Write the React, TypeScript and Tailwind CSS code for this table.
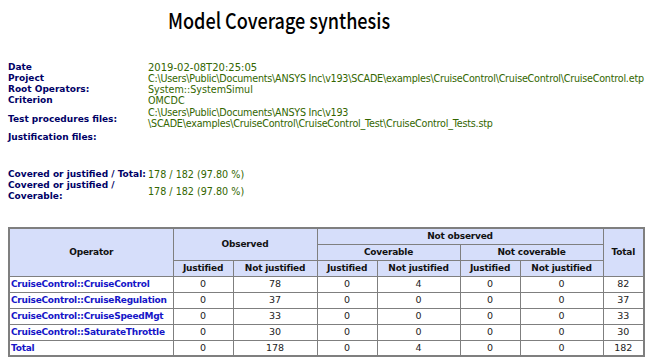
import React from "react";

const rows = [
  ["CruiseControl::CruiseControl", "0", "78", "0", "4", "0", "0", "82"],
  ["CruiseControl::CruiseRegulation", "0", "37", "0", "0", "0", "0", "37"],
  ["CruiseControl::CruiseSpeedMgt", "0", "33", "0", "0", "0", "0", "33"],
  ["CruiseControl::SaturateThrottle", "0", "30", "0", "0", "0", "0", "30"],
  ["Total", "0", "178", "0", "4", "0", "0", "182"],
];

const th = "border border-[#7f7f7f] bg-[#d6defa] text-[#111] font-bold text-center p-0 h-[16px] leading-[14px] tracking-[-0.2px]";
const td = "border border-[#7f7f7f] text-center p-0 h-[16px] leading-[14px] text-[#222] text-[9.5px]";

export default function App() {
  return (
    <div className="w-[650px] h-[363px] bg-white overflow-hidden" style={{ fontFamily: '"DejaVu Sans", Verdana, sans-serif' }}>
      <div className="pt-[5px] pl-[168px] h-[62px]">
        <h1 className="inline-block origin-left scale-x-[0.82] text-[22px] leading-[28px] text-black whitespace-nowrap" style={{ fontFamily: '"Noto Sans CJK JP", "Liberation Sans", sans-serif', fontWeight: 500 }}>
          Model Coverage synthesis
        </h1>
      </div>
      <div className="pl-[8px] grid grid-cols-[140px_1fr] text-[9px] leading-[11px]">
        <div className="font-bold text-[#000066]">Date</div>
        <div className="text-[#336600] text-[10px]">2019-02-08T20:25:05</div>
        <div className="font-bold text-[#000066]">Project</div>
        <div className="text-[#336600] text-[9.6px] whitespace-nowrap tracking-[-0.22px]">C:\Users\Public\Documents\ANSYS Inc\v193\SCADE\examples\CruiseControl\CruiseControl\CruiseControl.etp</div>
        <div className="font-bold text-[#000066]">Root Operators:</div>
        <div className="text-[#336600] text-[9.6px]">System::SystemSimul</div>
        <div className="font-bold text-[#000066]">Criterion</div>
        <div className="text-[#336600] text-[9.6px]">OMCDC</div>
        <div className="font-bold text-[#000066] flex items-center pt-[3px]">Test procedures files:</div>
        <div className="text-[#336600] text-[9.6px] pt-[1px] tracking-[-0.22px] whitespace-nowrap">
          C:\Users\Public\Documents\ANSYS Inc\v193
          <br />
          \SCADE\examples\CruiseControl\CruiseControl_Test\CruiseControl_Tests.stp
        </div>
        <div className="font-bold text-[#000066] pt-[3px]">Justification files:</div>
        <div></div>
      </div>
      <div className="pl-[8px] pt-[26px] grid grid-cols-[140px_1fr] text-[9px] leading-[11px]">
        <div className="font-bold text-[#000066]">Covered or justified / Total:</div>
        <div className="text-[#336600] text-[9.6px]">178 / 182 (97.80 %)</div>
        <div className="font-bold text-[#000066]">Covered or justified /<br />Coverable:</div>
        <div className="text-[#336600] text-[9.6px] flex items-center">178 / 182 (97.80 %)</div>
      </div>
      <div className="pl-[8px] pt-[25px]">
        <table className="border-collapse border-2 border-[#7f7f7f] text-[9px] table-fixed w-[635px]">
          <colgroup>
            <col className="w-[164px]" />
            <col className="w-[60px]" />
            <col className="w-[84px]" />
            <col className="w-[60px]" />
            <col className="w-[83px]" />
            <col className="w-[60px]" />
            <col className="w-[83px]" />
            <col className="w-[41px]" />
          </colgroup>
          <thead>
            <tr>
              <th rowSpan={3} className={th}>Operator</th>
              <th rowSpan={2} colSpan={2} className={th}>Observed</th>
              <th colSpan={4} className={th}>Not observed</th>
              <th rowSpan={3} className={th}>Total</th>
            </tr>
            <tr>
              <th colSpan={2} className={th}>Coverable</th>
              <th colSpan={2} className={th}>Not coverable</th>
            </tr>
            <tr>
              <th className={th}>Justified</th>
              <th className={th}>Not justified</th>
              <th className={th}>Justified</th>
              <th className={th}>Not justified</th>
              <th className={th}>Justified</th>
              <th className={th}>Not justified</th>
            </tr>
          </thead>
          <tbody>
            {rows.map((r) => (
              <tr key={r[0]}>
                <td className="border border-[#7f7f7f] p-0 pl-[1px] h-[16px] leading-[14px] text-left font-bold text-[#1515c8] whitespace-nowrap tracking-[-0.25px]">{r[0]}</td>
                {r.slice(1).map((v, i) => (
                  <td key={i} className={td}>{v}</td>
                ))}
              </tr>
            ))}
          </tbody>
        </table>
      </div>
    </div>
  );
}
